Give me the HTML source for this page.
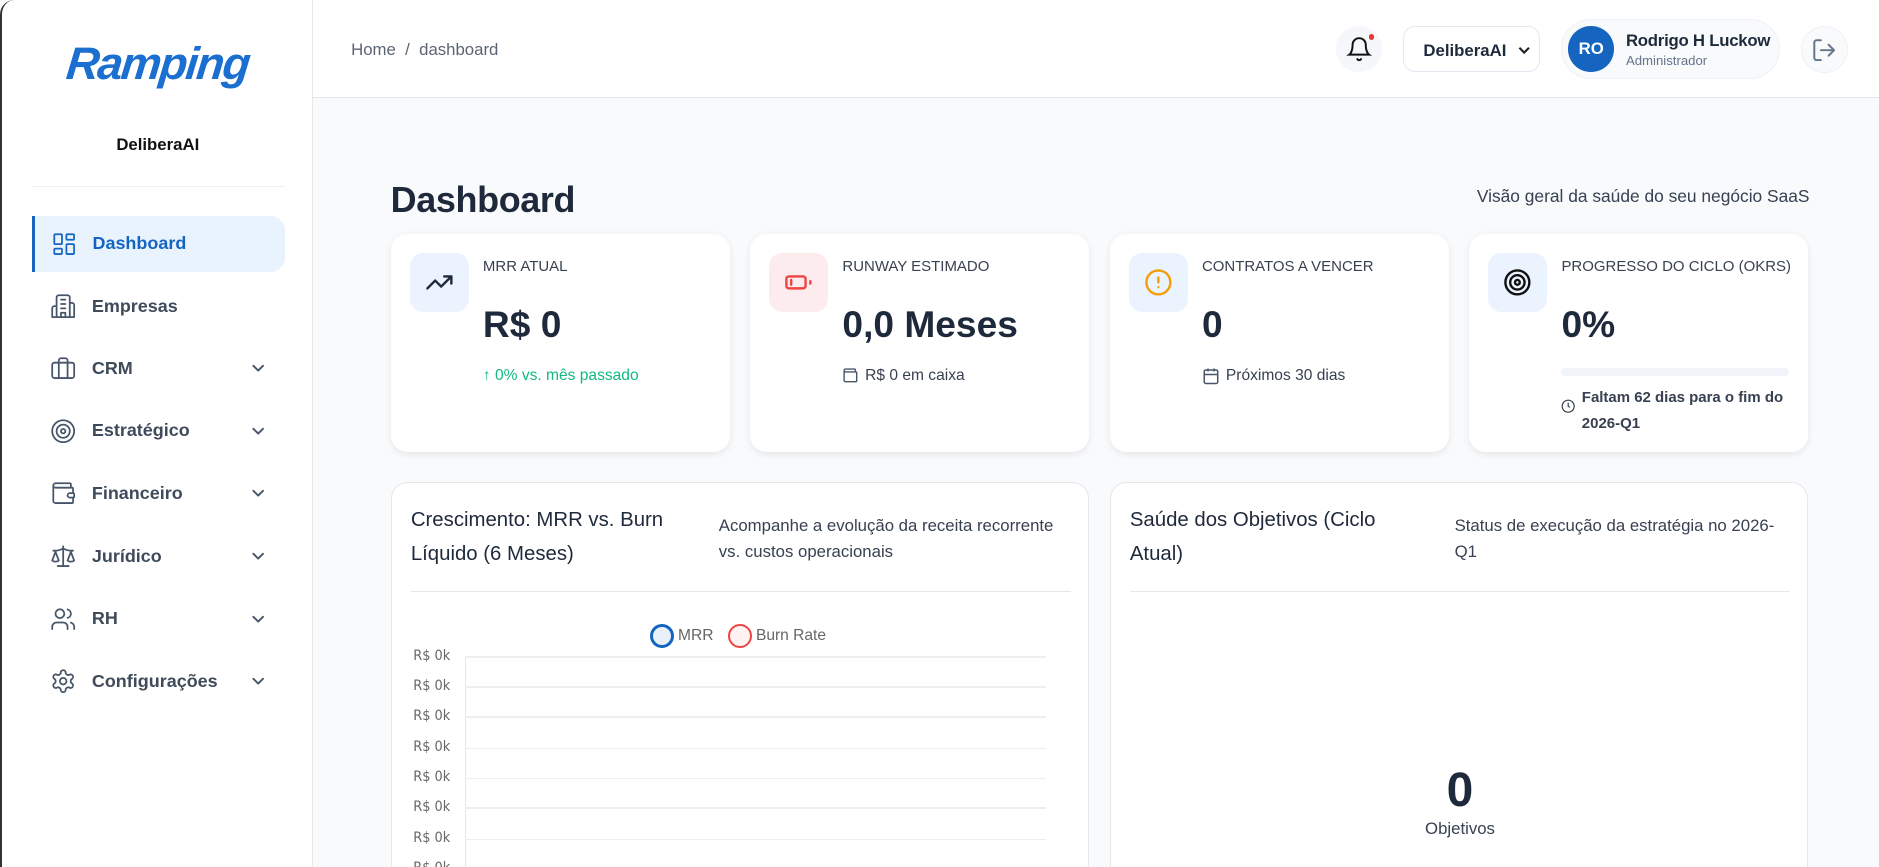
<!DOCTYPE html>
<html><head><meta charset="utf-8"><style>
*{box-sizing:border-box;margin:0;padding:0}
html,body{width:1879px;height:867px;overflow:hidden;background:#f8fafc}
#root{zoom:1.19835;width:1568px;height:724px;position:relative;font-family:"Liberation Sans",sans-serif;color:#1e293b}
.abs{position:absolute}
.side{left:0;top:0;width:261px;height:724px;background:#fff;border-right:1px solid #e5e7eb;border-left:2px solid #333;border-top-left-radius:12px}
.logo{left:0;width:260px;top:32px;text-align:center;font-family:"Liberation Sans",sans-serif;font-style:italic;font-weight:bold;font-size:38px;color:#1a6fd0;letter-spacing:-1.5px;transform:skewX(-6deg)}
.nav{left:25px;width:211px;height:47px;display:flex;align-items:center;padding-left:15px;font-size:15px;font-weight:bold;color:#3f4a5a}
.nav svg{width:22px;height:22px;margin-right:13px;fill:none;stroke:#475569;stroke-width:1.6;stroke-linecap:round;stroke-linejoin:round}
.nav .ch{position:absolute;right:16px;width:12px;height:12px;margin:0}
.hdr{left:261px;top:0;width:1307px;height:82px;background:#fff;border-bottom:1px solid #e5e7eb}
.card{background:#fff;border-radius:14px;box-shadow:0 2px 6px rgba(0,0,0,.08);top:195px;width:283px;height:182px}
.ib{left:16px;top:16px;width:49px;height:49px;border-radius:11px;display:flex;align-items:center;justify-content:center}
.ib svg{width:24px;height:24px;fill:none;stroke-width:2;stroke-linecap:round;stroke-linejoin:round}
.lbl{left:77px;top:20px;font-size:12.5px;color:#374151}
.val{left:77px;top:58px;font-size:31px;font-weight:bold;color:#1e293b}
.sub{left:77px;top:111px;font-size:13px;color:#374151;display:flex;align-items:center;gap:5px}
.big{background:#fff;border-radius:14px;border:1px solid #e5e7eb;top:402px;width:583px;height:340px}
.yl{left:18px;font-size:12px;color:#666;font-family:"DejaVu Sans Condensed","Liberation Sans",sans-serif}
.gl{left:61px;width:485px;height:1px;background:#eee}
</style></head><body><div id="root">
<div class="abs side">
 <div class="abs logo">Ramping</div>
 <div class="abs" style="left:0;width:260px;top:113px;text-align:center;font-size:14px;font-weight:bold;color:#111">DeliberaAI</div>
 <div class="abs" style="left:25px;top:155px;width:211px;height:1px;background:#eef0f3"></div>
 <div class="abs nav" style="top:180px;background:#e8f3fe;color:#1565c0;border-left:3px solid #1565c0;border-radius:0 12px 12px 0;padding-left:13px"><svg viewBox="0 0 24 24" style="stroke:#1565c0"><rect x="3" y="3" width="7" height="9" rx="1"/><rect x="14" y="3" width="7" height="5" rx="1"/><rect x="14" y="12" width="7" height="9" rx="1"/><rect x="3" y="16" width="7" height="5" rx="1"/></svg>Dashboard</div>
 <div class="abs nav" style="top:232px"><svg viewBox="0 0 24 24"><path d="M6 22V4a2 2 0 0 1 2-2h8a2 2 0 0 1 2 2v18Z"/><path d="M6 12H4a2 2 0 0 0-2 2v8h4M18 9h2a2 2 0 0 1 2 2v11h-4M10 6h4M10 10h4M10 14h4M10 22v-4h4v4"/></svg>Empresas</div>
 <div class="abs nav" style="top:284px"><svg viewBox="0 0 24 24"><rect x="2" y="7" width="20" height="14" rx="2"/><path d="M16 21V5a2 2 0 0 0-2-2h-4a2 2 0 0 0-2 2v16"/></svg>CRM<svg class="ch" viewBox="0 0 12 12"><path d="M2 4l4 4 4-4"/></svg></div>
 <div class="abs nav" style="top:336px"><svg viewBox="0 0 24 24"><circle cx="12" cy="12" r="10"/><circle cx="12" cy="12" r="6"/><circle cx="12" cy="12" r="2"/></svg>Estratégico<svg class="ch" viewBox="0 0 12 12"><path d="M2 4l4 4 4-4"/></svg></div>
 <div class="abs nav" style="top:388px"><svg viewBox="0 0 24 24"><path d="M19 7V4a1 1 0 0 0-1-1H5a2 2 0 0 0 0 4h15a1 1 0 0 1 1 1v4h-3a2 2 0 0 0 0 4h3a1 1 0 0 0 1-1v-2a1 1 0 0 0-1-1"/><path d="M3 5v14a2 2 0 0 0 2 2h15a1 1 0 0 0 1-1v-4"/></svg>Financeiro<svg class="ch" viewBox="0 0 12 12"><path d="M2 4l4 4 4-4"/></svg></div>
 <div class="abs nav" style="top:441px"><svg viewBox="0 0 24 24"><path d="m16 16 3-8 3 8c-.87.65-1.920 1-3 1s-2.13-.35-3-1ZM2 16l3-8 3 8c-.87.65-1.92 1-3 1s-2.13-.35-3-1ZM7 21h10M12 3v18M3 7h2c2 0 5-1 7-2 2 1 5 2 7 2h2"/></svg>Jurídico<svg class="ch" viewBox="0 0 12 12"><path d="M2 4l4 4 4-4"/></svg></div>
 <div class="abs nav" style="top:493px"><svg viewBox="0 0 24 24"><path d="M16 21v-2a4 4 0 0 0-4-4H6a4 4 0 0 0-4 4v2"/><circle cx="9" cy="7" r="4"/><path d="M22 21v-2a4 4 0 0 0-3-3.87M16 3.13a4 4 0 0 1 0 7.75"/></svg>RH<svg class="ch" viewBox="0 0 12 12"><path d="M2 4l4 4 4-4"/></svg></div>
 <div class="abs nav" style="top:545px"><svg viewBox="0 0 24 24"><path d="M12.22 2h-.44a2 2 0 0 0-2 2v.18a2 2 0 0 1-1 1.73l-.43.25a2 2 0 0 1-2 0l-.15-.08a2 2 0 0 0-2.730.73l-.22.38a2 2 0 0 0 .73 2.73l.15.1a2 2 0 0 1 1 1.72v.51a2 2 0 0 1-1 1.74l-.15.09a2 2 0 0 0-.73 2.73l.22.38a2 2 0 0 0 2.73.73l.15-.08a2 2 0 0 1 2 0l.43.25a2 2 0 0 1 1 1.73V20a2 2 0 0 0 2 2h.44a2 2 0 0 0 2-2v-.18a2 2 0 0 1 1-1.73l.43-.25a2 2 0 0 1 2 0l.15.08a2 2 0 0 0 2.73-.73l.22-.39a2 2 0 0 0-.73-2.73l-.15-.08a2 2 0 0 1-1-1.74v-.5a2 2 0 0 1 1-1.74l.15-.09a2 2 0 0 0 .73-2.73l-.22-.38a2 2 0 0 0-2.73-.73l-.15.08a2 2 0 0 1-2 0l-.43-.25a2 2 0 0 1-1-1.730V4a2 2 0 0 0-2-2z"/><circle cx="12" cy="12" r="3"/></svg>Configurações<svg class="ch" viewBox="0 0 12 12"><path d="M2 4l4 4 4-4"/></svg></div>
</div>
<div class="abs hdr">
 <div class="abs" style="left:32px;top:33px;font-size:14px;color:#5b6472">Home &nbsp;/&nbsp; dashboard</div>
 <div class="abs" style="left:854px;top:22px;width:38px;height:38px;border-radius:50%;background:#f5f7fa;display:flex;align-items:center;justify-content:center"><svg width="22" height="22" viewBox="0 0 24 24" fill="none" stroke="#111" stroke-width="1.8" stroke-linecap="round"><path d="M6 8a6 6 0 0 1 12 0c0 7 3 9 3 9H3s3-2 3-9M10.3 21a1.94 1.94 0 0 0 3.4 0"/></svg><div class="abs" style="left:27px;top:6px;width:5px;height:5px;border-radius:50%;background:#e53935"></div></div>
 <div class="abs" style="left:910px;top:22px;width:114px;height:38px;border:1px solid #e2e8f0;border-radius:10px;font-size:14px;font-weight:bold;padding:11px 0 0 16px;color:#1e293b">DeliberaAI<svg class="abs" style="right:6px;top:13px" width="12" height="12" viewBox="0 0 12 12" fill="none" stroke="#222" stroke-width="1.8"><path d="M2 4l4 4 4-4"/></svg></div>
 <div class="abs" style="left:1042px;top:16px;width:182px;height:50px;border-radius:25px;background:#f8fafc;border:1px solid #eef1f5"><div class="abs" style="left:5px;top:5px;width:38px;height:38px;border-radius:50%;background:#1565c0;color:#fff;font-weight:bold;font-size:14px;text-align:center;line-height:38px">RO</div><div class="abs" style="left:53px;top:9px;font-size:14px;font-weight:bold;color:#1e293b;letter-spacing:-0.2px">Rodrigo H Luckow</div><div class="abs" style="left:53px;top:27px;font-size:11px;color:#64748b">Administrador</div></div>
 <div class="abs" style="left:1242px;top:22px;width:39px;height:39px;border-radius:50%;background:#f8fafc;border:1px solid #eef1f5;display:flex;align-items:center;justify-content:center"><svg width="22" height="22" viewBox="0 0 24 24" fill="none" stroke="#64748b" stroke-width="1.8" stroke-linecap="round" stroke-linejoin="round"><path d="M9 21H5a2 2 0 0 1-2-2V5a2 2 0 0 1 2-2h4M16 17l5-5-5-5M21 12H9"/></svg></div>
</div>
<div class="abs" style="left:326px;top:149px;font-size:30px;font-weight:bold;color:#1e293b;letter-spacing:-0.3px">Dashboard</div>
<div class="abs" style="right:58px;top:155px;font-size:14.5px;color:#374151">Visão geral da saúde do seu negócio SaaS</div>

<div class="abs card" style="left:326px"><div class="abs ib" style="background:#eaf3fe"><svg viewBox="0 0 24 24" stroke="#1e293b"><path d="M22 7l-8.5 8.5-5-5L2 17M16 7h6v6"/></svg></div><div class="abs lbl">MRR ATUAL</div><div class="abs val">R$ 0</div><div class="abs sub" style="color:#10b981">↑ 0% vs. mês passado</div></div>
<div class="abs card" style="left:626px"><div class="abs ib" style="background:#fdeced"><svg viewBox="0 0 24 24" stroke="#ef4444"><rect x="2" y="7" width="16" height="10" rx="2"/><path d="M22 11v2M6 10v4"/></svg></div><div class="abs lbl">RUNWAY ESTIMADO</div><div class="abs val">0,0 Meses</div><div class="abs sub"><svg width="14" height="14" viewBox="0 0 24 24" fill="none" stroke="#475569" stroke-width="2"><path d="M19 7V4a1 1 0 0 0-1-1H5a2 2 0 0 0 0 4h15a1 1 0 0 1 1 1v12a1 1 0 0 1-1 1H5a2 2 0 0 1-2-2V5"/></svg>R$ 0 em caixa</div></div>
<div class="abs card" style="left:926px"><div class="abs ib" style="background:#eaf3fe"><svg viewBox="0 0 24 24" stroke="#f59e0b"><circle cx="12" cy="12" r="10"/><path d="M12 8v4M12 16h.01"/></svg></div><div class="abs lbl">CONTRATOS A VENCER</div><div class="abs val">0</div><div class="abs sub"><svg width="15" height="15" viewBox="0 0 24 24" fill="none" stroke="#475569" stroke-width="2"><rect x="3" y="4" width="18" height="18" rx="2"/><path d="M16 2v4M8 2v4M3 10h18"/></svg>Próximos 30 dias</div></div>
<div class="abs card" style="left:1226px"><div class="abs ib" style="background:#eaf3fe"><svg viewBox="0 0 24 24" stroke="#111"><circle cx="12" cy="12" r="10"/><circle cx="12" cy="12" r="6"/><circle cx="12" cy="12" r="2"/></svg></div><div class="abs lbl">PROGRESSO DO CICLO (OKRS)</div><div class="abs val">0%</div><div class="abs" style="left:77px;top:112px;width:190px;height:7px;border-radius:4px;background:#f1f5f9"></div><div class="abs" style="left:77px;top:126px;width:200px;font-size:12.5px;line-height:22px;color:#374151;padding-left:17px;font-weight:bold"><svg class="abs" style="left:0;top:12px" width="12" height="12" viewBox="0 0 24 24" fill="none" stroke="#374151" stroke-width="2"><circle cx="12" cy="12" r="10"/><path d="M12 6v6l3 2"/></svg>Faltam 62 dias para o fim do 2026-Q1</div></div>

<div class="abs big" style="left:326px">
 <div class="abs" style="left:16px;top:18px;width:240px;font-size:17px;line-height:28px;color:#1e293b">Crescimento: MRR vs. Burn Líquido (6 Meses)</div>
 <div class="abs" style="left:273px;top:25px;width:300px;font-size:14px;line-height:22px;color:#374151">Acompanhe a evolução da receita recorrente vs. custos operacionais</div>
 <div class="abs" style="left:16px;top:90px;width:551px;height:1px;background:#e5e7eb"></div>
 <div class="abs" style="left:216px;top:118px;width:20px;height:20px;border-radius:50%;border:3px solid #1565c0;background:#e8f0fa"></div>
 <div class="abs" style="left:239px;top:120px;font-size:13px;color:#666">MRR</div>
 <div class="abs" style="left:281px;top:118px;width:20px;height:20px;border-radius:50%;border:2px solid #ef4444;background:#fef2f2"></div>
 <div class="abs" style="left:304px;top:120px;font-size:13px;color:#666">Burn Rate</div>
 <div class="abs" style="left:61px;top:145px;width:1px;height:200px;background:#e5e5e5"></div>
 <div class="abs gl" style="top:145px"></div><div class="abs yl" style="top:138px">R$ 0k</div>
 <div class="abs gl" style="top:170px"></div><div class="abs yl" style="top:163px">R$ 0k</div>
 <div class="abs gl" style="top:195px"></div><div class="abs yl" style="top:188px">R$ 0k</div>
 <div class="abs gl" style="top:221px"></div><div class="abs yl" style="top:214px">R$ 0k</div>
 <div class="abs gl" style="top:246px"></div><div class="abs yl" style="top:239px">R$ 0k</div>
 <div class="abs gl" style="top:271px"></div><div class="abs yl" style="top:264px">R$ 0k</div>
 <div class="abs gl" style="top:297px"></div><div class="abs yl" style="top:290px">R$ 0k</div>
 <div class="abs gl" style="top:322px"></div><div class="abs yl" style="top:315px">R$ 0k</div>
</div>
<div class="abs big" style="left:926px">
 <div class="abs" style="left:16px;top:18px;width:240px;font-size:17px;line-height:28px;color:#1e293b">Saúde dos Objetivos (Ciclo Atual)</div>
 <div class="abs" style="left:287px;top:25px;width:285px;font-size:14px;line-height:22px;color:#374151">Status de execução da estratégia no 2026-Q1</div>
 <div class="abs" style="left:16px;top:90px;width:551px;height:1px;background:#e5e7eb"></div>
 <div class="abs" style="left:0;width:583px;top:234px;text-align:center;font-size:40px;font-weight:bold;color:#1e293b">0</div>
 <div class="abs" style="left:0;width:583px;top:281px;text-align:center;font-size:14px;color:#374151">Objetivos</div>
</div>
</div></body></html>
